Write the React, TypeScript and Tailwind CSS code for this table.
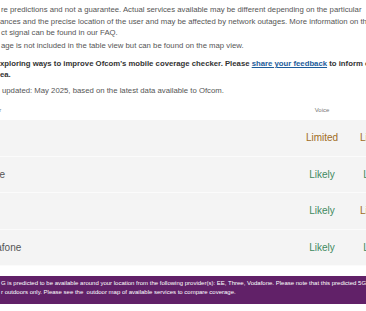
import React from 'react';

type Level = 'Likely' | 'Limited';

interface Row {
  name: string;
  voice: Level;
  data: Level;
}

const rows: Row[] = [
  { name: 'EE', voice: 'Limited', data: 'Limited' },
  { name: 'Three', voice: 'Likely', data: 'Likely' },
  { name: 'O2', voice: 'Likely', data: 'Limited' },
  { name: 'Vodafone', voice: 'Likely', data: 'Likely' },
];

const levelClass = (level: Level) =>
  level === 'Likely' ? 'text-[#3f8a5f]' : 'text-[#a06c24]';

export default function App() {
  return (
    <div className="w-[366px] h-[311px] overflow-hidden bg-white font-['Liberation_Sans',Arial,sans-serif]">
      <div className="pt-[4px] pl-[1px] whitespace-nowrap text-[7.75px] text-[#555]">
        {/* intro paragraphs */}
        <div className="leading-[11.7px]">
          <div>re predictions and not a guarantee. Actual services available may be different depending on the particular</div>
          <div className="-ml-[1px]">ances and the precise location of the user and may be affected by network outages. More information on the</div>
          <div>ct signal can be found in our FAQ.</div>
        </div>
        <div className="mt-[1px] leading-[11.7px]">age is not included in the table view but can be found on the map view.</div>
        <div className="mt-[6px] leading-[11px] font-bold text-[#333] -ml-[1px]">
          <div>
            xploring ways to improve Ofcom&apos;s mobile coverage checker. Please{' '}
            <a href="#" className="text-[#1d5c9a] underline">share your feedback</a> to inform our
          </div>
          <div>ea.</div>
        </div>
        <div className="mt-[5.5px] leading-[11.7px] pl-[1px]">updated: May 2025, based on the latest data available to Ofcom.</div>
      </div>

      {/* coverage table */}
      <div className="-ml-[21px] w-[500px]">
        <div className="grid grid-cols-[316px_54px_60px_54px] h-[23px] pt-[9px] text-[6px] leading-[8px] text-[#777]">
          <div>Provider</div>
          <div className="text-center">Voice</div>
          <div className="text-center">Data</div>
          <div></div>
        </div>
        {rows.map((row) => (
          <div
            key={row.name}
            className="grid grid-cols-[316px_54px_54px_54px] items-center h-[36.5px] bg-[#f4f4f4] border-b border-[#fbfbfb] text-[10px]"
          >
            <div className="text-[#555]">{row.name}</div>
            <div className={`text-center ${levelClass(row.voice)}`}>{row.voice}</div>
            <div className={`text-center ${levelClass(row.data)}`}>{row.data}</div>
            <div></div>
          </div>
        ))}
      </div>

      {/* 5G banner */}
      <div className="mt-[9.5px] h-[28.6px] bg-[#612168] pt-[3px] pl-[1px] whitespace-nowrap text-[6px] leading-[9px] text-white">
        <div>G is predicted to be available around your location from the following provider(s): EE, Three, Vodafone. Please note that this predicted 5G</div>
        <div>r outdoors only. Please see the&nbsp; outdoor map of available services to compare coverage.</div>
      </div>
    </div>
  );
}
